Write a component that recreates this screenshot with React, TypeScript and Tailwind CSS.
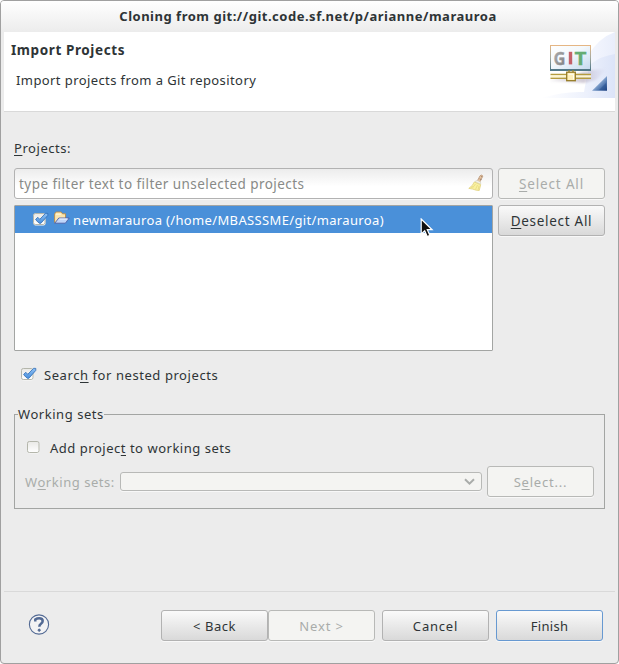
import React from "react";

function Button({
  children,
  disabled = false,
  primary = false,
  className = "",
}: {
  children: React.ReactNode;
  disabled?: boolean;
  primary?: boolean;
  className?: string;
}) {
  const look = disabled
    ? "border-[#b8b9b7] bg-[#f4f4f2] text-[#a9acaa]"
    : primary
      ? "border-[#6799d1] bg-linear-to-b from-[#fafafa] to-[#d9d9d9] text-[#2e3436]"
      : "border-[#b2b2b2] bg-linear-to-b from-[#fafafa] to-[#d9d9d9] text-[#2e3436]";
  return (
    <button
      type="button"
      className={`flex h-[31px] w-[107px] shrink-0 items-center justify-center whitespace-pre rounded-[3px] border pt-px shadow-[0_1px_0_#f8f8f8] ${look} ${className}`}
    >
      {children}
    </button>
  );
}

function U({ children }: { children: React.ReactNode }) {
  return <span className="underline decoration-1 underline-offset-2">{children}</span>;
}

function CheckBox({ checked = false }: { checked?: boolean }) {
  return (
    <svg width="16" height="14" viewBox="0 0 16 14" className="-mt-[2px] shrink-0">
      <defs>
        <linearGradient id="box" x1="0" y1="0" x2="0" y2="1">
          <stop offset="0" stopColor="#e9e9e6" />
          <stop offset="1" stopColor="#ffffff" />
        </linearGradient>
        <linearGradient id="tick" x1="0" y1="0" x2="0" y2="1">
          <stop offset="0" stopColor="#8fc1f5" />
          <stop offset="1" stopColor="#4a90dc" />
        </linearGradient>
      </defs>
      <rect x="0.5" y="1.5" width="12" height="12" rx="2" fill="#f9f9f8" />
      <rect x="0.5" y="1.5" width="11.5" height="11" rx="1.8" fill="url(#box)" stroke="#b4b6ab" />
      {checked && (
        <path
          d="M2.8 7.2l2-1.9 2 2L12.6 1.3l2.2.1v2L7.9 11.3H6.3L2.8 8z"
          fill="url(#tick)"
          stroke="#2f6cb4"
          strokeWidth="0.8"
          strokeLinejoin="round"
        />
      )}
    </svg>
  );
}

function Folder() {
  return (
    <svg width="16" height="14" viewBox="0 0 16 14" className="shrink-0">
      <path d="M0.6 11.4V3L2 1h5.2l1.3 1.8h3V7L4 11.4z" fill="#fbe5ae" stroke="#b98b48" strokeWidth="0.9" />
      <path d="M2 3.2h5" stroke="#fff9dc" />
      <path d="M0.8 12.2l4-5.2h10.4l-3.8 5.2z" fill="#c0d6fa" stroke="#4c5fa7" strokeWidth="0.9" strokeLinejoin="round" />
      <path d="M5.4 8h8" stroke="#f1f6ff" />
    </svg>
  );
}

function Broom() {
  return (
    <svg width="16" height="18" viewBox="0 0 16 18" className="-mt-[2px] shrink-0">
      <path d="M9.2 7.2l2.8-5.4q1.6-1.5 2.9.2l-3.2 6.2z" fill="#eac6a0" stroke="#b89678" strokeWidth="0.8" />
      <path d="M11.5 4.8l2 .8M13.4 2.2l.3 1" stroke="#8d7060" strokeWidth="0.8" />
      <path d="M6.8 7.6l2.4-1.3 3.4 1.8.1 2.2z" fill="#f3f1e5" stroke="#cfcbb8" strokeWidth="0.6" />
      <path d="M6.3 8l6.4 2.7-1.5 5.8-3.4-.4-3-1L.8 14.4l3.5-3z" fill="#f9f1a0" stroke="#e3d585" strokeWidth="0.9" />
      <path d="M7.5 10l-3 4M9.5 11l-2 4.5M11 11.8l-.8 4M4.8 12l-2 2" stroke="#e0d076" strokeWidth="0.6" />
    </svg>
  );
}

function GitBanner() {
  return (
    <svg width="75" height="66" viewBox="540 32 75 66" className="shrink-0">
      <defs>
        <linearGradient id="sky" x1="0" y1="0" x2="1" y2="0">
          <stop offset="0" stopColor="#ffffff" />
          <stop offset="0.6" stopColor="#edf1fc" />
          <stop offset="1" stopColor="#dce4f8" />
        </linearGradient>
        <linearGradient id="arc" x1="0" y1="0" x2="1" y2="0">
          <stop offset="0" stopColor="#f5f7fe" />
          <stop offset="1" stopColor="#e9eefb" />
        </linearGradient>
        <linearGradient id="panel" x1="0" y1="0" x2="1" y2="1">
          <stop offset="0" stopColor="#ffffff" />
          <stop offset="0.45" stopColor="#f3f8fc" />
          <stop offset="1" stopColor="#c4d9ee" />
        </linearGradient>
        <linearGradient id="frame" x1="0" y1="0" x2="0" y2="1">
          <stop offset="0" stopColor="#e5b684" />
          <stop offset="0.5" stopColor="#a5aaa0" />
          <stop offset="1" stopColor="#527887" />
        </linearGradient>
        <linearGradient id="corner" x1="0" y1="0" x2="1" y2="1">
          <stop offset="0.3" stopColor="#bcd3ed" />
          <stop offset="0.65" stopColor="#5a80b6" />
          <stop offset="1" stopColor="#183b7c" />
        </linearGradient>
        <linearGradient id="letter" x1="0" y1="0" x2="1" y2="1">
          <stop offset="0" stopColor="#b4b4b4" />
          <stop offset="1" stopColor="#7d7d7d" />
        </linearGradient>
        <linearGradient id="shade" x1="0" y1="0" x2="1" y2="0">
          <stop offset="0" stopColor="#b6acb9" stopOpacity="0.2" />
          <stop offset="0.6" stopColor="#a398ae" stopOpacity="0.5" />
          <stop offset="1" stopColor="#b6afd0" stopOpacity="0" />
        </linearGradient>
        <filter id="soft">
          <feGaussianBlur stdDeviation="1.2" />
        </filter>
      </defs>
      <path d="M588 78V56Q598 38 615 32V98H588z" fill="url(#arc)" />
      <path d="M541 98Q565 91 584 92Q588 68 591 64Q601 56 615 54V98z" fill="url(#sky)" />
      <path d="M549 81L591 70L607 69L596 80L584 83z" fill="url(#shade)" filter="url(#soft)" />
      <rect x="550.5" y="45.5" width="40" height="24" fill="url(#panel)" stroke="url(#frame)" />
      <path d="M550 70h41" stroke="#527887" strokeWidth="1.8" />
      <g fontFamily="Noto Sans" fontWeight="700" fontSize="18" letterSpacing="0">
        <text x="553.5" y="64.5" textLength="12" lengthAdjust="spacingAndGlyphs" fill="url(#letter)" stroke="url(#letter)" strokeWidth="0.3">G</text>
        <rect x="568.8" y="51.8" width="3.4" height="12.6" fill="#c46068" />
        <text x="574.4" y="64.5" textLength="12" lengthAdjust="spacingAndGlyphs" fill="#65ad72" stroke="#65ad72" strokeWidth="0.3">T</text>
      </g>
      <path d="M550.5 74.6h40.5M550.5 78.2h40.5" stroke="#b59c3f" strokeWidth="1.5" />
      <path d="M550.5 76.4h40.5" stroke="#fff7cd" strokeWidth="1.8" />
      <path d="M569 70v3M573 70v3" stroke="#a18931" strokeWidth="1.3" />
      <rect x="566.7" y="72.2" width="8.6" height="8.5" fill="#fff0bb" stroke="#967b25" strokeWidth="1.3" />
      <path d="M568.5 74.3h5v5" fill="none" stroke="#fffdf1" />
      <path d="M592 90.8L607 76V90.8z" fill="url(#corner)" />
      <path d="M599 90l7-7v7z" fill="#24508f" fillOpacity="0.5" />
    </svg>
  );
}

export default function App() {
  return (
    <div className="h-[664px] w-[619px] bg-white">
      <div className="relative flex h-full flex-col overflow-hidden rounded-[4px] border border-[#a0a0a0] bg-[#ececec] px-[3px] font-['Noto_Sans',sans-serif] text-[13px] leading-[18px] tracking-[0.55px] text-[#2e3436]">
        <div className="-mx-[3px] flex h-[31px] shrink-0 items-center justify-center bg-linear-to-b from-white to-[#ececec] pr-[3px] pb-[2px]">
          <h1 className="text-[13px] font-bold tracking-[0.51px] whitespace-nowrap">Cloning from git://git.code.sf.net/p/arianne/marauroa</h1>
        </div>

        <header className="flex h-[80px] shrink-0 justify-between border-b border-[#d9d9d9] bg-white">
          <div className="flex flex-col pt-[9px] pl-[7px]">
            <h2 className="text-[13.5px] font-bold tracking-[0.6px]">Import Projects</h2>
            <p className="mt-[12px] pl-[5px] tracking-[0.41px]">Import projects from a Git repository</p>
          </div>
          <GitBanner />
        </header>

        <main className="flex h-[479px] shrink-0 flex-col px-[10px] pt-[27px]">
          <label className="h-[29px]">
            <U>P</U>rojects:
          </label>
          <div className="flex gap-[5px]">
            <div className="flex w-[479px] flex-col gap-[6px]">
              <div className="flex h-[31px] items-center justify-between rounded-[3px] border border-[#b2b2b2] bg-linear-to-b from-[#ececec] to-white to-60% pr-[8px] pl-[4px] text-[#888a87] shadow-[0_1px_0_#f8f8f8]">
                <span className="text-[13.5px] tracking-[0.44px]">type filter text to filter unselected projects</span>
                <Broom />
              </div>
              <div className="h-[146px] rounded-[1px] border border-[#a3a5a3] bg-white">
                <div className="flex h-[27px] items-center bg-[#4a90d9] pl-[18px] text-white">
                  <CheckBox checked />
                  <span className="mt-[-4px] ml-[5px]"><Folder /></span>
                  <span className="ml-[3px] pt-px tracking-[0.35px]">newmarauroa (/home/MBASSSME/git/marauroa)</span>
                </div>
              </div>
            </div>
            <div className="flex flex-col gap-[6px]">
              <Button disabled className="text-[13.5px] tracking-[0.85px]"><U>S</U>elect All</Button>
              <Button className="text-[13.5px] tracking-[0.7px]"><U>D</U>eselect All</Button>
            </div>
          </div>

          <div className="mt-[15px] flex h-[18px] items-center pl-[7px]">
            <CheckBox checked />
            <span className="ml-[7px] tracking-[0.57px]">Searc<U>h</U> for nested projects</span>
          </div>

          <fieldset className="mt-[21px] h-[104px] w-[591px] border border-[#a3a5a3] pl-[10px]">
            <legend className="-ml-[7px] h-[18px]">Working sets</legend>
            <div className="mt-[16px] flex h-[18px] items-center pl-[2px]">
              <CheckBox />
              <span className="ml-[7px] tracking-[0.52px]">Add projec<U>t</U> to working sets</span>
            </div>
            <div className="mt-[9px] flex items-center">
              <span className="w-[95px] text-[#a9acaa]">W<U>o</U>rking sets:</span>
              <div className="flex h-[19px] w-[362px] items-center justify-end rounded-[3px] border border-[#b8b9b7] bg-[#f4f4f2] pr-[6px] shadow-[0_1px_0_#f8f8f8]">
                <svg width="11" height="8" viewBox="0 0 11 8" fill="none" stroke="#a9acaa" strokeWidth="2">
                  <path d="M1 1.3l4.5 4.4L10 1.3" />
                </svg>
              </div>
              <Button disabled className="ml-[5px] tracking-[0.8px]">S<U>e</U>lect...</Button>
            </div>
          </fieldset>
        </main>

        <footer className="flex h-[72px] items-center border-t border-[#d9d9d9] pr-[12px] pl-[24px] pb-[3px]">
          <svg width="22" height="22" viewBox="0 0 22 22" fill="none" stroke="#536a94" className="-mt-[2px]">
            <circle cx="11" cy="10.5" r="9.6" fill="#f3f3f4" strokeWidth="1.1" />
            <path d="M7.3 7.4V5.4Q9 4.2 11.2 4.2Q14.7 4.2 14.7 7.1Q14.7 8.6 13 9.8Q11.3 11 11.3 12.8" strokeWidth="2.5" />
            <circle cx="11.2" cy="16.2" r="1.1" fill="#536a94" />
          </svg>
          <div className="mt-[-2px] ml-auto flex">
            <Button>{"< Back"}</Button>
            <Button disabled className="tracking-[0.9px]">{"Next >"}</Button>
            <Button className="ml-[7px] tracking-[0.8px]">Cancel</Button>
            <Button primary className="ml-[7px] tracking-[0.3px]">Finish</Button>
          </div>
        </footer>

        <svg width="14" height="20" viewBox="0 0 14 20" className="absolute top-[217px] left-[419px]">
          <path d="M1.2 1v15l3.5-3.3 2.5 5.8 2.7-1.1-2.6-5.7h4.8z" fill="#111" stroke="white" strokeWidth="1.2" />
        </svg>
      </div>
    </div>
  );
}
